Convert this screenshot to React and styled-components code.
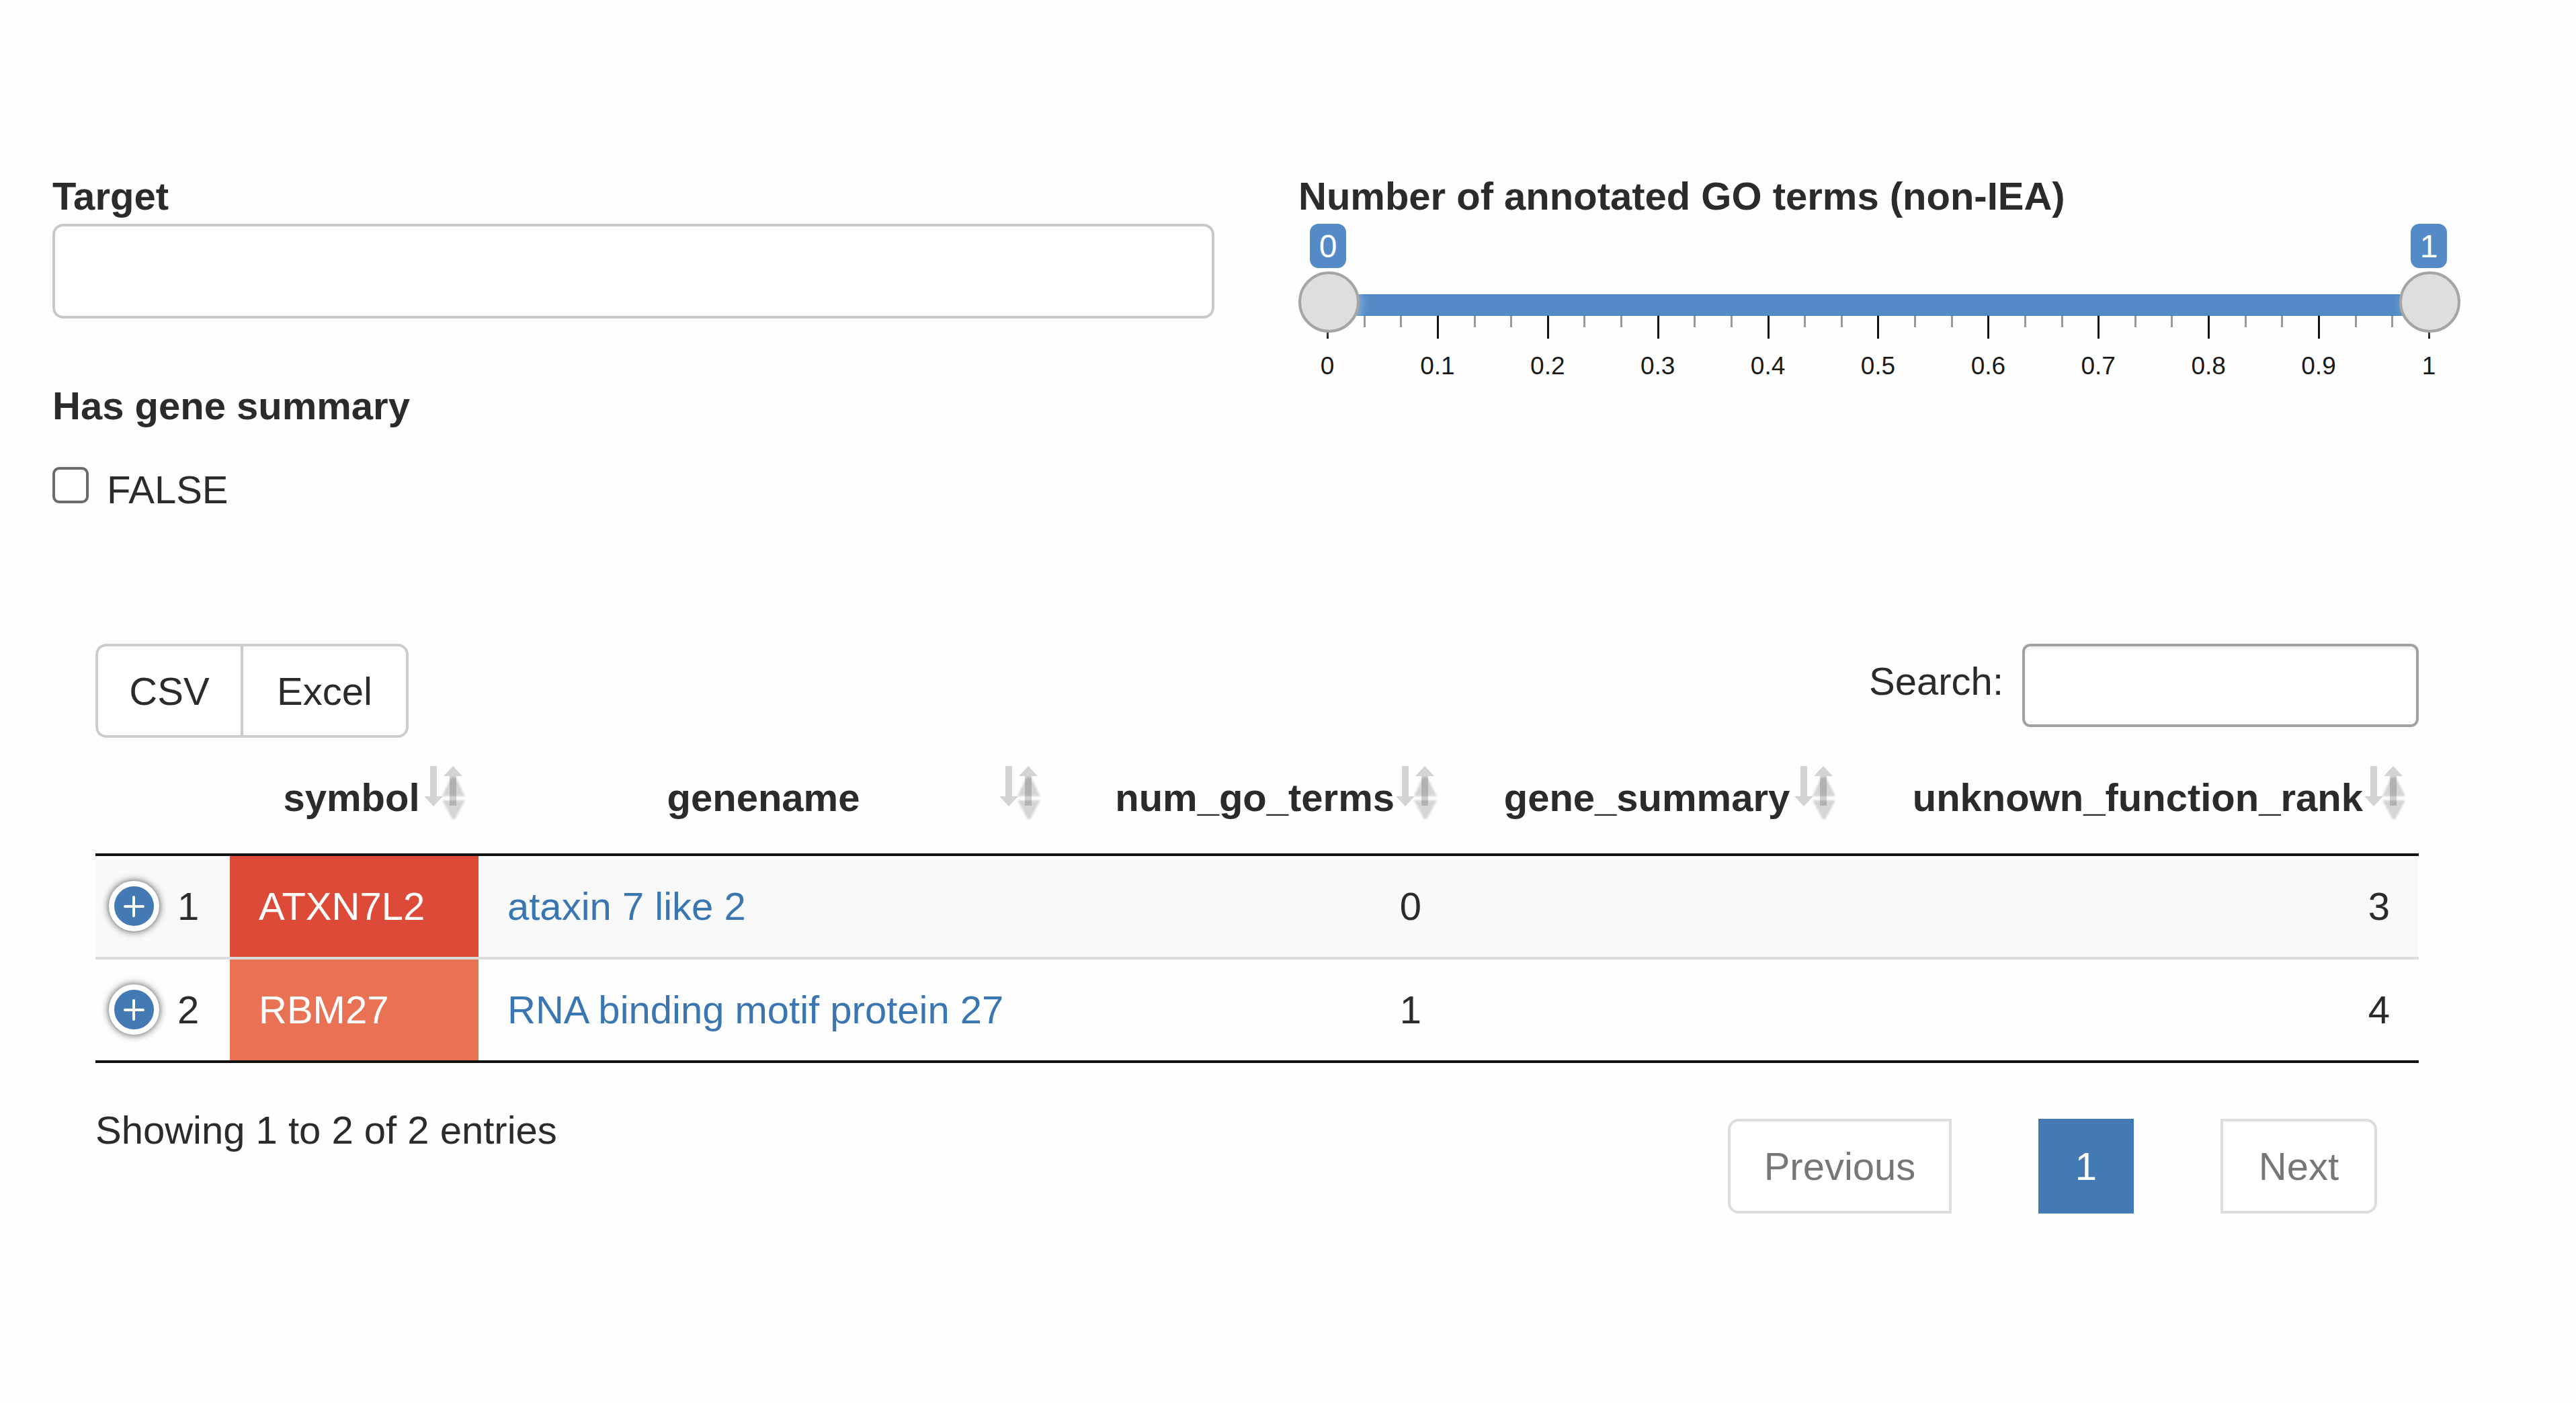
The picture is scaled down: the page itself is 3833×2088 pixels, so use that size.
import React, { useState } from "react";
import styled, { createGlobalStyle, css } from "styled-components";

const GlobalStyle = createGlobalStyle`
  *, *::before, *::after { box-sizing: border-box; }
  body {
    margin: 0;
    background: #fefefe;
    color: #2b2b2b;
    font-family: "Helvetica Neue", "Liberation Sans", Arial, sans-serif;
    font-size: 58px;
    line-height: 83px;
  }
  button, input { font: inherit; color: inherit; }
`;

const Page = styled.main`
  padding: 250px 172px 120px 78px;
`;

const Filters = styled.section`
  display: grid;
  grid-template-columns: 1fr 1fr;
  column-gap: 125px;
  align-items: start;
`;

const Column = styled.div`
  display: flex;
  flex-direction: column;
`;

const FieldLabel = styled.label`
  font-weight: 700;
`;

const TargetInput = styled.input`
  width: 100%;
  height: 141px;
  padding: 0 50px;
  border: 4px solid #c8c8c8;
  border-radius: 16px;
  background: #fff;
  outline: none;
`;

const CheckGroup = styled.div`
  display: flex;
  flex-direction: column;
  gap: 42px;
  margin-top: 88px;
`;

const GroupTitle = styled.span`
  font-weight: 700;
`;

const CheckLabel = styled.label`
  display: flex;
  align-items: flex-start;
  gap: 27px;
`;

const CheckBox = styled.input`
  appearance: none;
  width: 54px;
  height: 54px;
  margin: 8px 0 0;
  border: 4px solid #6b6b6b;
  border-radius: 10px;
  background: #fff;
  &:checked { background: #447ab4; }
`;

/* Range slider */

const Badges = styled.div`
  display: flex;
  justify-content: space-between;
  padding: 0 20px 0 17px;
`;

const Badge = styled.output`
  width: 54px;
  height: 66px;
  border-radius: 13px;
  background: #548bc6;
  color: #fff;
  font-size: 48px;
  line-height: 68px;
  text-align: center;
`;

const SliderBody = styled.div`
  display: grid;
  align-items: start;
  height: 100px;
  margin-top: 5px;
  & > * { grid-area: 1 / 1; }
`;

const Bar = styled.div`
  height: 32px;
  margin: 34px 44px 0;
  border: solid #3981c6;
  border-width: 1px 0;
  background: #548bc6;
`;

const Ticks = styled.div`
  display: flex;
  justify-content: space-between;
  margin: 66px 45px 0 42px;
`;

const Tick = styled.i`
  width: 3px;
  height: ${(p) => (p.$major ? "34px" : "17px")};
  background: ${(p) => (p.$major ? "#111" : "#999")};
`;

const thumb = css`
  appearance: none;
  width: 91px;
  height: 91px;
  border: 4px solid #a5a5a5;
  border-radius: 50%;
  background: #dedede;
  box-shadow: 4px 4px 12px rgba(255, 255, 255, 0.3);
  pointer-events: auto;
  cursor: pointer;
`;

const Range = styled.input`
  appearance: none;
  width: 100%;
  height: 91px;
  margin: 0;
  background: transparent;
  pointer-events: none;
  outline: none;
  z-index: 1;
  &::-webkit-slider-thumb { ${thumb} }
  &::-moz-range-thumb { ${thumb} }
`;

const Scale = styled.div`
  display: flex;
  justify-content: space-between;
  margin: 20px 47px 0 43px;
  color: #1a1a1a;
  font-size: 37px;
  line-height: 42px;
`;

const ScaleValue = styled.span`
  display: flex;
  justify-content: center;
  width: 0;
`;

/* Data table */

const TablePanel = styled.section`
  margin-top: 188px;
  padding: 0 62px 0 64px;
`;

const Toolbar = styled.div`
  display: flex;
  justify-content: space-between;
  align-items: flex-start;
  margin-bottom: 5px;
`;

const ButtonGroup = styled.div`
  display: flex;
`;

const ToolButton = styled.button`
  width: ${(p) => p.$width}px;
  height: 140px;
  padding: 0;
  border: 4px solid #ccc;
  background: #fff;
  cursor: pointer;
  &:first-child { border-radius: 16px 0 0 16px; }
  &:last-child { margin-left: -4px; border-radius: 0 16px 16px 0; }
`;

const SearchLabel = styled.label`
  display: flex;
  align-items: flex-start;
  gap: 28px;
`;

const SearchText = styled.span`
  padding-top: 14px;
`;

const SearchInput = styled.input`
  width: 590px;
  height: 124px;
  padding: 0 20px;
  border: 4px solid #a0a0a0;
  border-radius: 12px;
  background: #fff;
  box-shadow: inset 0 4px 4px rgba(0, 0, 0, 0.05);
  outline: none;
`;

const DataTable = styled.table`
  width: 100%;
  table-layout: fixed;
  border-collapse: separate;
  border-spacing: 0;
  border-bottom: 4px solid #111;
`;

const HeadCell = styled.th`
  position: relative;
  padding: 42px 83px 42px 75px;
  border-bottom: 4px solid #111;
  text-align: ${(p) => p.$align || "center"};
  white-space: nowrap;
  cursor: pointer;
`;

const SortMark = styled.svg`
  position: absolute;
  top: 37px;
  right: 17px;
  width: 68px;
  height: 84px;
`;

const Row = styled.tr`
  &:nth-child(odd) { background: #f9f9f9; }
  & + & > td { border-top: 4px solid #ddd; }
`;

const Cell = styled.td`
  padding: 33px 43px 34px;
  text-align: ${(p) => p.$align || "left"};
  background: ${(p) => p.$fill || "transparent"};
  color: ${(p) => (p.$fill ? "#fff" : "inherit")};
  white-space: nowrap;
`;

const IndexCell = styled(Cell)`
  padding-left: 20px;
  padding-right: 0;
`;

const IndexContent = styled.div`
  display: flex;
  align-items: center;
  gap: 27px;
`;

const ExpandButton = styled.button`
  display: flex;
  align-items: center;
  justify-content: center;
  width: 75px;
  height: 75px;
  padding: 0;
  border: 8px solid #fff;
  border-radius: 50%;
  background: #447ab4;
  color: #fff;
  box-shadow: 0 0 12px #444;
  cursor: pointer;
`;

const GeneLink = styled.a`
  color: #3a76b1;
  text-decoration: none;
`;

const Footer = styled.div`
  display: flex;
  justify-content: space-between;
  align-items: flex-start;
  padding: 58px 62px 0 0;
`;

const Pager = styled.nav`
  display: flex;
  gap: 129px;
  margin-top: 25px;
`;

const PageButton = styled.button`
  width: ${(p) => p.$width}px;
  height: 141px;
  padding: 0;
  border: 4px solid ${(p) => (p.$active ? "#447ab4" : "#ddd")};
  background: ${(p) => (p.$active ? "#447ab4" : "#fff")};
  color: ${(p) => (p.$active ? "#fff" : "#777")};
  &:first-child { border-radius: 16px 0 0 16px; }
  &:last-child { border-radius: 0 16px 16px 0; }
`;

function SortIcon() {
  return (
    <SortMark viewBox="0 0 68 84" aria-hidden="true">
      <defs>
        <filter id="soft" x="-20%" y="-20%" width="140%" height="140%">
          <feGaussianBlur stdDeviation="1.8" />
        </filter>
      </defs>
      <g fill="#000" fillOpacity="0.17">
        <path d="M13 0h10v45h9L18 60 4 45h9z" />
        <path d="M47 0 61 15h-9v44H42V15h-9z" />
      </g>
      <g fill="#000" fillOpacity="0.16" filter="url(#soft)">
        <path d="M44 17h7L65 45H31z" />
        <path d="M31 51h34L50 79h-4z" />
      </g>
    </SortMark>
  );
}

function PlusIcon() {
  return (
    <svg width="32" height="32" viewBox="0 0 32 32" aria-hidden="true">
      <path
        d="M2 16h27M15 2v28"
        stroke="currentColor"
        strokeWidth="4"
        strokeLinecap="round"
      />
    </svg>
  );
}

const COLUMNS = [
  { key: "index", width: 200 },
  { key: "symbol", width: 370 },
  { key: "genename", width: 856 },
  { key: "num_go_terms", width: 590, align: "right" },
  { key: "gene_summary", width: 593 },
  { key: "unknown_function_rank", width: 848, align: "right" },
];

const ROWS = [
  { id: 1, symbol: "ATXN7L2", fill: "#dd4b38", name: "ataxin 7 like 2", terms: 0, rank: 3 },
  { id: 2, symbol: "RBM27", fill: "#e87253", name: "RNA binding motif protein 27", terms: 1, rank: 4 },
];

const SCALE = ["0", "0.1", "0.2", "0.3", "0.4", "0.5", "0.6", "0.7", "0.8", "0.9", "1"];

function GoTermSlider() {
  const [low, setLow] = useState(0);
  const [high, setHigh] = useState(1);
  return (
    <Column>
      <FieldLabel htmlFor="go-min">Number of annotated GO terms (non-IEA)</FieldLabel>
      <Badges>
        <Badge htmlFor="go-min">{low}</Badge>
        <Badge htmlFor="go-max">{high}</Badge>
      </Badges>
      <SliderBody>
        <Bar />
        <Ticks>
          {Array.from({ length: 31 }, (_, i) => (
            <Tick key={i} $major={i % 3 === 0} />
          ))}
        </Ticks>
        <Range
          id="go-min" type="range" min="0" max="1" step="1" value={low}
          onChange={(e) => setLow(Math.min(Number(e.target.value), high))}
        />
        <Range
          id="go-max" type="range" min="0" max="1" step="1" value={high}
          aria-label="Maximum number of annotated GO terms"
          onChange={(e) => setHigh(Math.max(Number(e.target.value), low))}
        />
      </SliderBody>
      <Scale>
        {SCALE.map((v) => (
          <ScaleValue key={v}>{v}</ScaleValue>
        ))}
      </Scale>
    </Column>
  );
}

export default function App() {
  return (
    <>
      <GlobalStyle />
      <Page>
        <Filters>
          <Column>
            <FieldLabel htmlFor="target">Target</FieldLabel>
            <TargetInput id="target" type="text" />
            <CheckGroup role="group" aria-labelledby="summary-title">
              <GroupTitle id="summary-title">Has gene summary</GroupTitle>
              <CheckLabel htmlFor="summary-false">
                <CheckBox id="summary-false" type="checkbox" />
                FALSE
              </CheckLabel>
            </CheckGroup>
          </Column>
          <GoTermSlider />
        </Filters>

        <TablePanel>
          <Toolbar>
            <ButtonGroup>
              <ToolButton type="button" $width={220}>CSV</ToolButton>
              <ToolButton type="button" $width={250}>Excel</ToolButton>
            </ButtonGroup>
            <SearchLabel htmlFor="table-search">
              <SearchText>Search:</SearchText>
              <SearchInput id="table-search" type="search" />
            </SearchLabel>
          </Toolbar>

          <DataTable>
            <colgroup>
              {COLUMNS.map((c) => (
                <col key={c.key} width={c.width} />
              ))}
            </colgroup>
            <thead>
              <tr>
                {COLUMNS.map((c, i) => (
                  <HeadCell key={c.key} scope="col" $align={c.align}>
                    {i > 0 && c.key}
                    {i > 0 && <SortIcon />}
                  </HeadCell>
                ))}
              </tr>
            </thead>
            <tbody>
              {ROWS.map((r) => (
                <Row key={r.id}>
                  <IndexCell>
                    <IndexContent>
                      <ExpandButton type="button" aria-label="Show details">
                        <PlusIcon />
                      </ExpandButton>
                      {r.id}
                    </IndexContent>
                  </IndexCell>
                  <Cell $fill={r.fill}>{r.symbol}</Cell>
                  <Cell>
                    <GeneLink href="#">{r.name}</GeneLink>
                  </Cell>
                  <Cell $align="right">{r.terms}</Cell>
                  <Cell />
                  <Cell $align="right">{r.rank}</Cell>
                </Row>
              ))}
            </tbody>
          </DataTable>

          <Footer>
            <span>Showing 1 to 2 of 2 entries</span>
            <Pager aria-label="Table pages">
              <PageButton type="button" $width={333}>Previous</PageButton>
              <PageButton type="button" $width={142} $active>1</PageButton>
              <PageButton type="button" $width={233}>Next</PageButton>
            </Pager>
          </Footer>
        </TablePanel>
      </Page>
    </>
  );
}
